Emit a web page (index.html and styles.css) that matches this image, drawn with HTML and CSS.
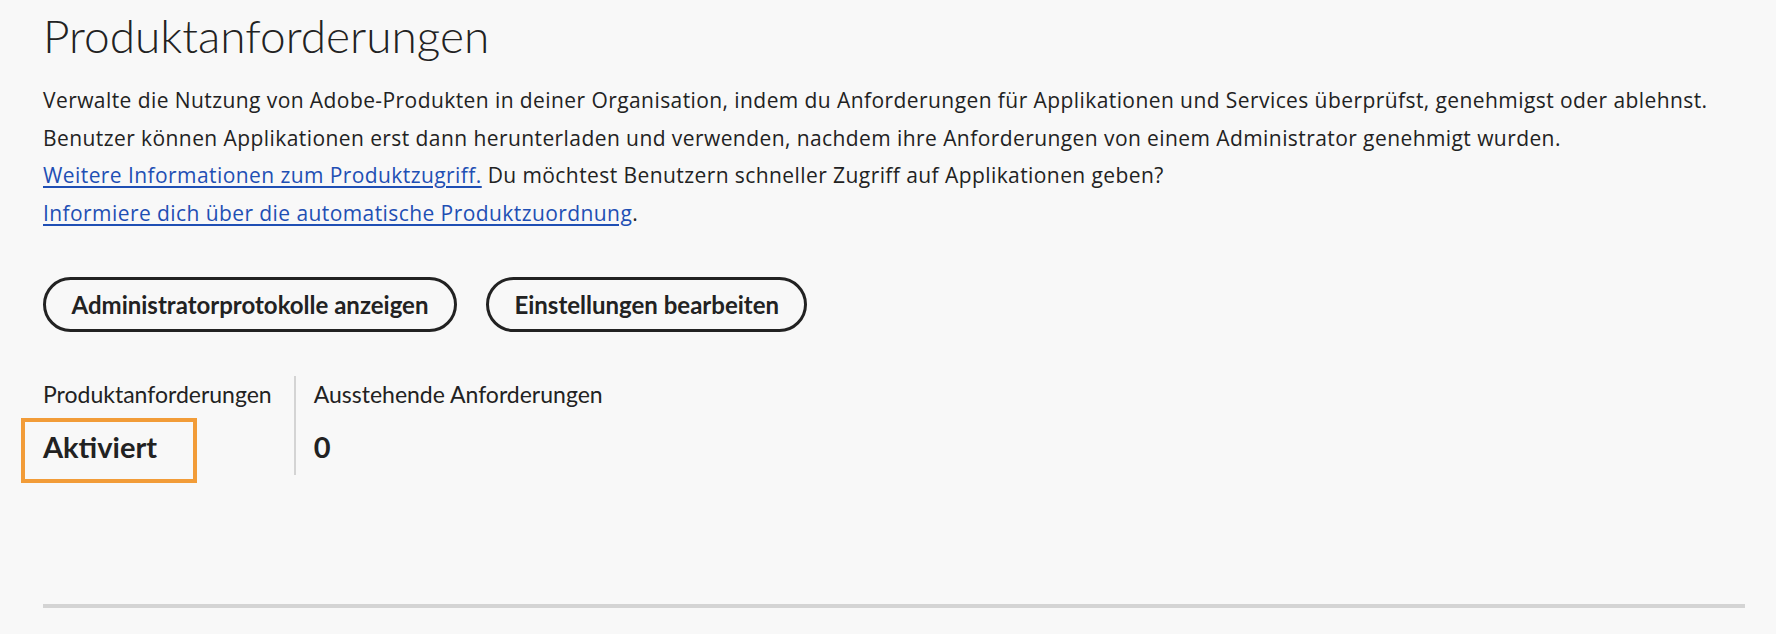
FILE: index.html
```html
<!DOCTYPE html>
<html lang="de">
<head>
<meta charset="utf-8">
<title>Produktanforderungen</title>
<link rel="stylesheet" href="styles.css">
</head>
<body>
<main class="page">
  <h1 class="title">Produktanforderungen</h1>
  <div class="intro">
    <p class="line">Verwalte die Nutzung von Adobe-Produkten in deiner Organisation, indem du Anforderungen für Applikationen und Services überprüfst, genehmigst oder ablehnst.</p>
    <p class="line">Benutzer können Applikationen erst dann herunterladen und verwenden, nachdem ihre Anforderungen von einem Administrator genehmigt wurden.</p>
    <p class="line"><a href="#" class="link">Weitere Informationen zum Produktzugriff.</a> Du möchtest Benutzern schneller Zugriff auf Applikationen geben?</p>
    <p class="line"><a href="#" class="link">Informiere dich über die automatische Produktzuordnung</a>.</p>
  </div>
  <div class="actions">
    <button class="btn" type="button">Administratorprotokolle anzeigen</button>
    <button class="btn" type="button">Einstellungen bearbeiten</button>
  </div>
  <div class="stats">
    <div class="stat">
      <div class="stat-label">Produktanforderungen</div>
      <div class="stat-value highlighted">Aktiviert</div>
    </div>
    <div class="stat stat-divided">
      <div class="stat-label">Ausstehende Anforderungen</div>
      <div class="stat-value">0</div>
    </div>
  </div>
  <hr class="rule">
</main>
</body>
</html>
```

FILE: styles.css
```css
html, body {
  margin: 0;
  padding: 0;
  background: #f8f8f8;
}

body {
  font-family: Lato, "Open Sans", "Liberation Sans", sans-serif;
  color: #222222;
}

.page {
  padding: 10px 31px 0 43px;
}

.title {
  margin: 0;
  font-weight: 300;
  font-size: 46px;
  line-height: 52px;
  color: #222222;
}

.intro {
  margin-top: 20px;
}

.line {
  margin: 0;
  font-family: "Open Sans", Lato, sans-serif;
  font-size: 21px;
  line-height: 37.5px;
  letter-spacing: 0.42px;
  white-space: nowrap;
}

.link {
  color: #1f4fb4;
  text-decoration: underline;
  text-underline-offset: 3px;
}

.actions {
  display: flex;
  gap: 29px;
  margin-top: 45px;
}

.btn {
  height: 55px;
  padding: 0 25.5px;
  border: 3px solid #222222;
  border-radius: 28px;
  background: transparent;
  font-family: inherit;
  font-weight: 700;
  font-size: 24px;
  color: #222222;
}

.stats {
  display: flex;
  margin-top: 44px;
}

.stat {
  padding-right: 22px;
}

.stat-divided {
  border-left: 2px solid #d4d4d4;
  padding-left: 18px;
  height: 99px;
}

.stat-label {
  font-size: 23px;
  line-height: 30px;
  padding-top: 3px;
}

.stat-value {
  font-weight: 700;
  font-size: 29px;
  line-height: 40px;
  margin-top: 18px;
}

.highlighted {
  position: relative;
}

.highlighted::after {
  content: "";
  position: absolute;
  box-sizing: border-box;
  left: -22px;
  top: -9px;
  width: 176px;
  height: 65px;
  border: 4px solid #f29c38;
}

.rule {
  margin: 129px 0 0 0;
  border: 0;
  height: 4px;
  background: #d4d4d4;
}
```
